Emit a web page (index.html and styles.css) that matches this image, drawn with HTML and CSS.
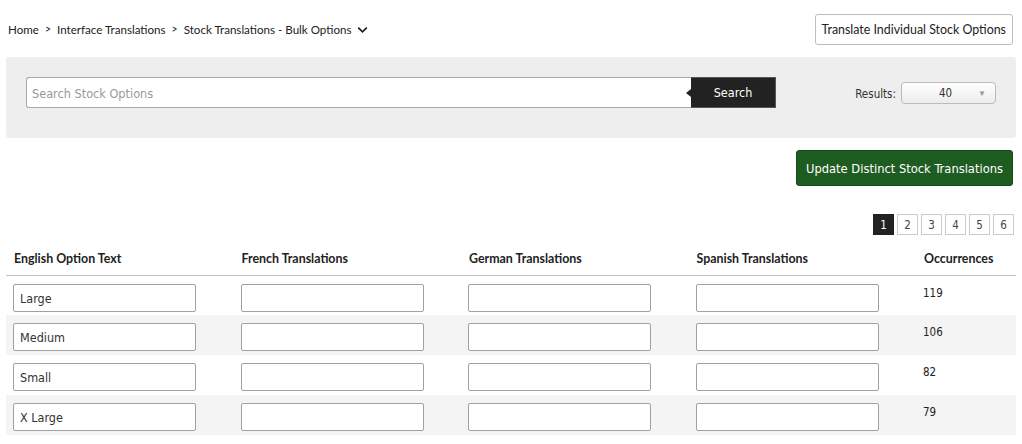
FILE: index.html
```html
<!DOCTYPE html>
<html>
<head>
<meta charset="utf-8">
<link rel="stylesheet" href="styles.css">
</head>
<body>
<div class="topbar">
  <nav class="crumbs">
    <a>Home</a><span class="sep">&gt;</span><a>Interface Translations</a><span class="sep">&gt;</span><a>Stock Translations - Bulk Options</a>
    <svg class="chev" width="11" height="8" viewBox="0 0 11 8"><path d="M1.2 1.6 L5.5 5.8 L9.8 1.6" fill="none" stroke="#222" stroke-width="1.8"/></svg>
  </nav>
  <button class="btn-outline">Translate Individual Stock Options</button>
</div>

<div class="panel">
  <div class="search">
    <input class="search-input" placeholder="Search Stock Options">
    <button class="search-btn">Search</button>
  </div>
  <div class="results">
    <span class="results-label">Results:</span>
    <div class="select"><span class="select-val">40</span><span class="select-arrow">&#9660;</span></div>
  </div>
</div>

<div class="actions">
  <button class="btn-green">Update Distinct Stock Translations</button>
</div>

<div class="pager">
  <span class="page active">1</span><span class="page">2</span><span class="page">3</span><span class="page">4</span><span class="page">5</span><span class="page">6</span>
</div>

<table class="grid">
  <colgroup><col class="c"><col class="c"><col class="c"><col class="c"><col class="last"></colgroup>
  <thead>
    <tr><th>English Option Text</th><th>French Translations</th><th>German Translations</th><th>Spanish Translations</th><th>Occurrences</th></tr>
  </thead>
  <tbody>
    <tr><td><input class="cell-input" value="Large"></td><td><input class="cell-input"></td><td><input class="cell-input"></td><td><input class="cell-input"></td><td class="num">119</td></tr>
    <tr><td><input class="cell-input" value="Medium"></td><td><input class="cell-input"></td><td><input class="cell-input"></td><td><input class="cell-input"></td><td class="num">106</td></tr>
    <tr><td><input class="cell-input" value="Small"></td><td><input class="cell-input"></td><td><input class="cell-input"></td><td><input class="cell-input"></td><td class="num">82</td></tr>
    <tr><td><input class="cell-input" value="X Large"></td><td><input class="cell-input"></td><td><input class="cell-input"></td><td><input class="cell-input"></td><td class="num">79</td></tr>
  </tbody>
</table>
</body>
</html>
```

FILE: styles.css
```css
* { box-sizing: border-box; }
html, body { margin: 0; padding: 0; background: #fff; }
body {
  padding: 0 6px;
  font-family: "Lato", "Noto Sans", sans-serif;
  font-size: 12px;
  color: #222;
}
.topbar {
  height: 57px;
  display: flex;
  align-items: center;
  justify-content: space-between;
  padding: 0 3px 0 2px;
}
.crumbs {
  display: flex;
  align-items: center;
  font-size: 11.6px;
  color: #222;
  margin-top: 1px;
}
.crumbs .sep { margin: 0 6px; font-size: 10.5px; }
.chev { margin-left: 6px; margin-top: 1px; }
.btn-outline {
  height: 31px;
  padding: 0 6px;
  background: #fff;
  border: 1px solid #bdbdbd;
  border-radius: 3px;
  font-family: "Lato", "Noto Sans", sans-serif;
  font-size: 12.4px;
  color: #222;
  margin-top: 1px;
}
.panel {
  height: 81px;
  background: #eeeeee;
  border-radius: 3px;
  padding: 20px 20px 0 20px;
  display: flex;
  justify-content: space-between;
  align-items: flex-start;
}
.search { display: flex; }
.search-input {
  width: 665px;
  height: 31px;
  border: 1px solid #a8a8a8;
  border-right: none;
  border-radius: 3px 0 0 3px;
  padding: 1px 5px 0;
  font-family: "DejaVu Sans Condensed", "DejaVu Sans", sans-serif;
  font-stretch: condensed;
  font-size: 12.6px;
  color: #333;
  background: #fff;
  outline: none;
}
.search-input::placeholder { color: #999; }
.search-btn {
  position: relative;
  width: 85px;
  height: 31px;
  background: #222;
  border: 1px solid #555;
  border-left: none;
  color: #fff;
  font-family: "DejaVu Sans Condensed", "DejaVu Sans", sans-serif;
  font-stretch: condensed;
  font-size: 12.5px;
  padding: 0;
}
.search-btn::before {
  content: "";
  position: absolute;
  left: -5px;
  top: 11px;
  border-top: 4px solid transparent;
  border-bottom: 4px solid transparent;
  border-right: 5px solid #222;
}
.results {
  display: flex;
  align-items: center;
  margin-top: 5px;
}
.results-label {
  font-family: "DejaVu Sans Condensed", "DejaVu Sans", sans-serif;
  font-stretch: condensed;
  font-size: 11.5px;
  color: #333;
  margin-right: 5px;
  margin-top: 1px;
}
.select {
  width: 95px;
  height: 22px;
  border: 1px solid #bbb;
  border-radius: 4px;
  background: linear-gradient(#ffffff, #ececec);
  position: relative;
  display: flex;
  align-items: center;
  justify-content: center;
}
.select-val {
  font-family: "DejaVu Sans Condensed", "DejaVu Sans", sans-serif;
  font-stretch: condensed;
  font-size: 11.5px;
  color: #333;
  margin-left: -6px;
}
.select-arrow {
  position: absolute;
  right: 9px;
  top: 5px;
  font-size: 8px;
  color: #999;
}
.actions {
  display: flex;
  justify-content: flex-end;
  padding: 12px 3px 0 0;
}
.btn-green {
  height: 36px;
  width: 217px;
  background: #1f5c22;
  border: 1px solid #184a1b;
  border-radius: 3px;
  color: #fff;
  font-family: "DejaVu Sans Condensed", "DejaVu Sans", sans-serif;
  font-stretch: condensed;
  font-size: 12.8px;
  padding: 0;
}
.pager {
  display: flex;
  justify-content: flex-end;
  gap: 3px;
  padding: 28px 2px 0 0;
}
.page {
  width: 21px;
  height: 21px;
  border: 1px solid #ccc;
  display: flex;
  align-items: center;
  justify-content: center;
  font-family: "DejaVu Sans Condensed", "DejaVu Sans", sans-serif;
  font-stretch: condensed;
  font-size: 11.5px;
  color: #444;
  background: #fff;
}
.page.active { background: #222; border-color: #222; color: #fff; }
.grid {
  width: 1010px;
  border-collapse: collapse;
  table-layout: fixed;
}
.grid col.c { width: 227.5px; }
.grid col.last { width: 100px; }
.grid th {
  text-align: left;
  font-weight: 700;
  font-size: 12.4px;
  color: #222;
  height: 40px;
  padding: 8px 0 0 8px;
  border-bottom: 1px solid #c2c2c2;
}
.grid td {
  height: 40px;
  padding: 8px 0 0 7px;
  vertical-align: top;
}
.grid tbody tr:nth-child(even) td { background: #f4f4f4; }
.cell-input {
  display: block;
  width: 183px;
  height: 28px;
  border: 1px solid #a0a0a0;
  border-radius: 2px;
  background: #fff;
  padding: 1px 6px 0;
  font-family: "DejaVu Sans Condensed", "DejaVu Sans", sans-serif;
  font-stretch: condensed;
  font-size: 12.5px;
  color: #333;
  outline: none;
}
.grid td.num {
  padding-top: 10px;
  font-family: "DejaVu Sans Condensed", "DejaVu Sans", sans-serif;
  font-stretch: condensed;
  font-size: 11.5px;
  color: #222;
}
```
